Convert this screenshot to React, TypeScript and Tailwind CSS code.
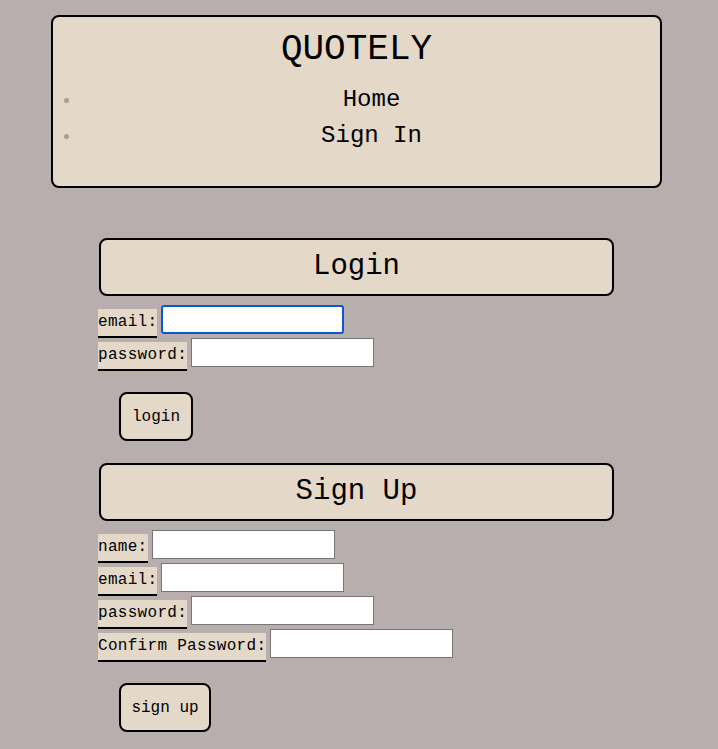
import React from "react";

const font = { fontFamily: '"Liberation Mono", "DejaVu Sans Mono", monospace' };

function Field({ label, focused }: { label: string; focused?: boolean }) {
  return (
    <div className="flex items-start gap-[4px] h-[33px]">
      <span className="mt-[4px] h-[29px] bg-[#e4d8c8] border-b-2 border-black text-[16px] leading-[27px] tracking-[0.3px] text-black whitespace-pre">
        {label}
      </span>
      <div
        className={
          focused
            ? "w-[183px] h-[29px] bg-white border-2 border-[#0b57d0] rounded-[3px]"
            : "w-[183px] h-[29px] bg-white border border-[#767676]"
        }
      />
    </div>
  );
}

function Section({
  title,
  fields,
  button,
  buttonWidth,
}: {
  title: string;
  fields: string[];
  button: string;
  buttonWidth: string;
}) {
  return (
    <div className="flex flex-col items-start">
      <div className="ml-[1px] w-[515px] h-[58px] bg-[#e4d8c8] border-2 border-black rounded-[8px] flex items-center justify-center">
        <span className="text-[29px] leading-[34px] text-black">{title}</span>
      </div>
      <div className="mt-[9px] flex flex-col">
        {fields.map((f, i) => (
          <Field key={f} label={f} focused={title === "Login" && i === 0} />
        ))}
      </div>
      <div
        className={`mt-[21px] ml-[21px] h-[49px] ${buttonWidth} bg-[#e4d8c8] border-2 border-black rounded-[8px] flex items-center justify-center text-[16px] text-black`}
      >
        {button}
      </div>
    </div>
  );
}

export default function App() {
  return (
    <div className="min-h-[749px] w-full bg-[#b9aeae] pb-[17px]" style={font}>
      <div className="pt-[15px]">
        <div className="ml-[51px] w-[611px] h-[173px] bg-[#e4d8c8] border-2 border-black rounded-[8px] pt-[13px]">
          <div className="text-center text-[36px] leading-[40px] text-black">QUOTELY</div>
          <ul className="mt-[12px]">
            {["Home", "Sign In"].map((t) => (
              <li key={t} className="flex items-center h-[36px]">
                <span className="ml-[11px] w-[5px] h-[5px] rounded-full bg-[#ab9c9e]" />
                <span className="ml-[16px] flex-1 text-center text-[24px] leading-[36px] text-black mr-[2px]">
                  {t}
                </span>
              </li>
            ))}
          </ul>
        </div>
      </div>
      <div className="pl-[98px] mt-[50px] flex flex-col gap-[22px]">
        <Section title="Login" fields={["email:", "password:"]} button="login" buttonWidth="w-[74px]" />
        <Section
          title="Sign Up"
          fields={["name:", "email:", "password:", "Confirm Password:"]}
          button="sign up"
          buttonWidth="w-[92px]"
        />
      </div>
    </div>
  );
}
